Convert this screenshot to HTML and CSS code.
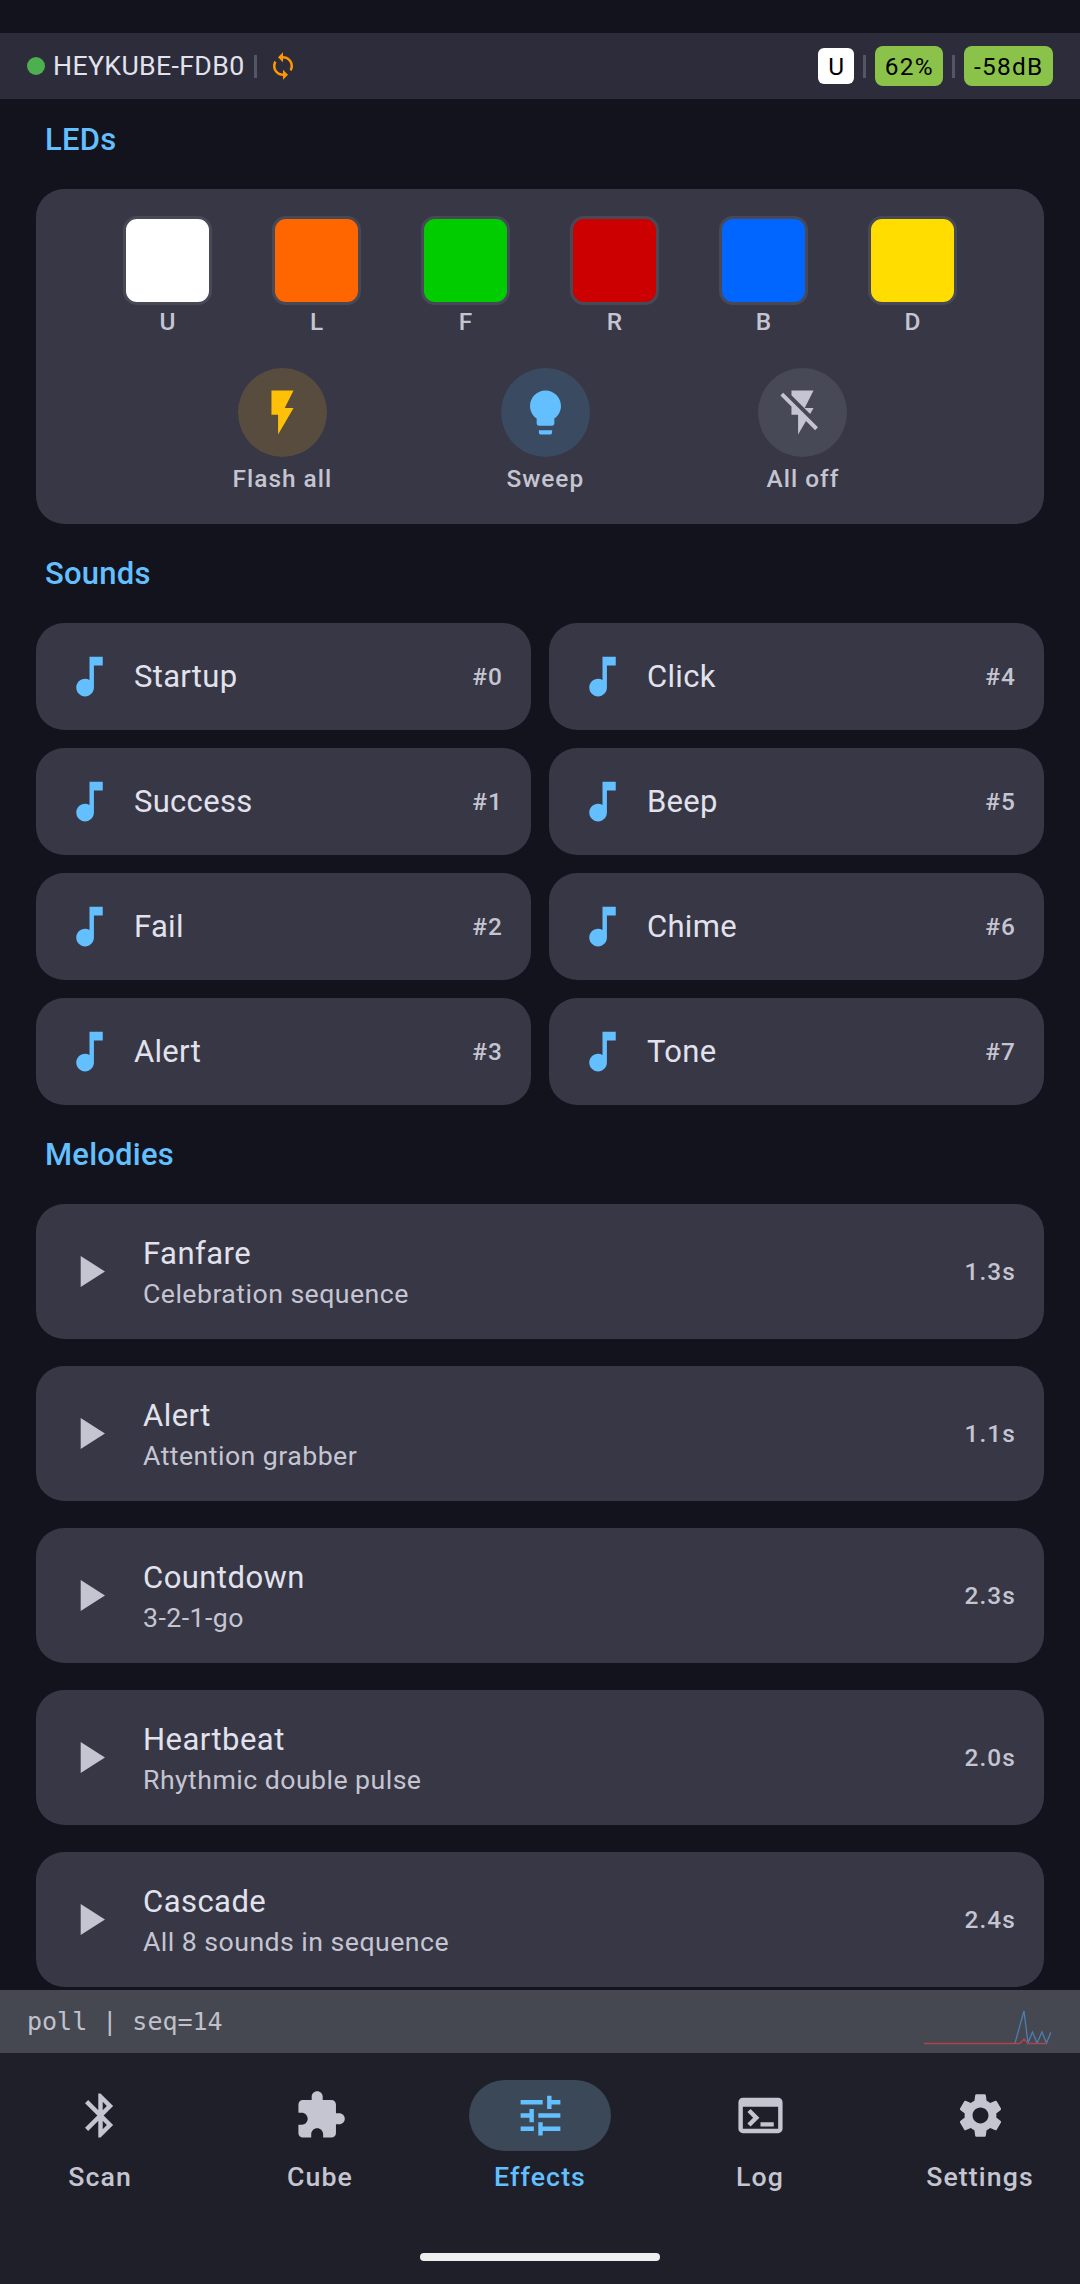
FILE: index.html
```html
<!DOCTYPE html>
<html lang="en">
<head>
    <meta charset="UTF-8">
    <meta name="viewport" content="width=device-width, initial-scale=1.0">
    <title>HeyKube Effects</title>
    <link rel="stylesheet" href="styles.css">
</head>
<body>
    <div class="status-space"></div>

    <header class="top-bar">
        <span class="dot"></span>
        <span class="device-name">HEYKUBE-FDB0</span>
        <span class="divider"></span>
        <svg class="sync-icon" viewBox="0 0 24 24"><path d="M12 4V1L8 5l4 4V6c3.31 0 6 2.69 6 6 0 1.01-.25 1.97-.7 2.8l1.46 1.46C19.54 15.03 20 13.57 20 12c0-4.42-3.58-8-8-8zm0 14c-3.31 0-6-2.69-6-6 0-1.01.25-1.97.7-2.8L5.24 7.74C4.46 8.97 4 10.43 4 12c0 4.42 3.58 8 8 8v3l4-4-4-4v3z"/></svg>
        <span class="top-spacer"></span>
        <span class="face-badge">U</span>
        <span class="divider"></span>
        <span class="pill">62%</span>
        <span class="divider"></span>
        <span class="pill">-58dB</span>
    </header>

    <main class="content">
        <h2 class="section-title first">LEDs</h2>
        <section class="led-card">
            <div class="led-row">
                <div class="led"><span class="swatch swatch-u"></span><span class="led-label">U</span></div>
                <div class="led"><span class="swatch swatch-l"></span><span class="led-label">L</span></div>
                <div class="led"><span class="swatch swatch-f"></span><span class="led-label">F</span></div>
                <div class="led"><span class="swatch swatch-r"></span><span class="led-label">R</span></div>
                <div class="led"><span class="swatch swatch-b"></span><span class="led-label">B</span></div>
                <div class="led"><span class="swatch swatch-d"></span><span class="led-label">D</span></div>
            </div>
            <div class="action-row">
                <div class="action">
                    <span class="circle circle-flash"><svg class="icon" viewBox="0 0 24 24"><path d="M7 2v11h3v9l7-12h-4l4-8z"/></svg></span>
                    <span class="action-label">Flash all</span>
                </div>
                <div class="action">
                    <span class="circle circle-sweep"><svg class="icon" viewBox="0 0 24 24"><path d="M9 21c0 .55.45 1 1 1h4c.55 0 1-.45 1-1v-1H9v1zm3-19C8.14 2 5 5.14 5 9c0 2.38 1.19 4.47 3 5.74V17c0 .55.45 1 1 1h6c.55 0 1-.45 1-1v-2.26c1.81-1.27 3-3.36 3-5.74 0-3.86-3.14-7-7-7z"/></svg></span>
                    <span class="action-label">Sweep</span>
                </div>
                <div class="action">
                    <span class="circle circle-off"><svg class="icon" viewBox="0 0 24 24"><path d="M3.27 3L2 4.27l5 5V13h3v9l3.58-6.14L17.73 20 19 18.73 3.27 3zM17 10h-4l4-8H7v2.18l8.46 8.46L17 10z"/></svg></span>
                    <span class="action-label">All off</span>
                </div>
            </div>
        </section>

        <h2 class="section-title">Sounds</h2>
        <section class="sound-grid">
            <div class="sound"><svg class="icon note" viewBox="0 0 24 24"><use href="#note"/></svg><span class="sound-name">Startup</span><span class="tag">#0</span></div>
            <div class="sound"><svg class="icon note" viewBox="0 0 24 24"><use href="#note"/></svg><span class="sound-name">Click</span><span class="tag">#4</span></div>
            <div class="sound"><svg class="icon note" viewBox="0 0 24 24"><use href="#note"/></svg><span class="sound-name">Success</span><span class="tag">#1</span></div>
            <div class="sound"><svg class="icon note" viewBox="0 0 24 24"><use href="#note"/></svg><span class="sound-name">Beep</span><span class="tag">#5</span></div>
            <div class="sound"><svg class="icon note" viewBox="0 0 24 24"><use href="#note"/></svg><span class="sound-name">Fail</span><span class="tag">#2</span></div>
            <div class="sound"><svg class="icon note" viewBox="0 0 24 24"><use href="#note"/></svg><span class="sound-name">Chime</span><span class="tag">#6</span></div>
            <div class="sound"><svg class="icon note" viewBox="0 0 24 24"><use href="#note"/></svg><span class="sound-name">Alert</span><span class="tag">#3</span></div>
            <div class="sound"><svg class="icon note" viewBox="0 0 24 24"><use href="#note"/></svg><span class="sound-name">Tone</span><span class="tag">#7</span></div>
        </section>

        <h2 class="section-title">Melodies</h2>
        <section class="melody-list">
            <div class="melody">
                <svg class="icon play" viewBox="0 0 24 24"><use href="#play"/></svg>
                <div class="melody-text"><span class="melody-name">Fanfare</span><span class="melody-desc">Celebration sequence</span></div>
                <span class="tag">1.3s</span>
            </div>
            <div class="melody">
                <svg class="icon play" viewBox="0 0 24 24"><use href="#play"/></svg>
                <div class="melody-text"><span class="melody-name">Alert</span><span class="melody-desc">Attention grabber</span></div>
                <span class="tag">1.1s</span>
            </div>
            <div class="melody">
                <svg class="icon play" viewBox="0 0 24 24"><use href="#play"/></svg>
                <div class="melody-text"><span class="melody-name">Countdown</span><span class="melody-desc">3-2-1-go</span></div>
                <span class="tag">2.3s</span>
            </div>
            <div class="melody">
                <svg class="icon play" viewBox="0 0 24 24"><use href="#play"/></svg>
                <div class="melody-text"><span class="melody-name">Heartbeat</span><span class="melody-desc">Rhythmic double pulse</span></div>
                <span class="tag">2.0s</span>
            </div>
            <div class="melody">
                <svg class="icon play" viewBox="0 0 24 24"><use href="#play"/></svg>
                <div class="melody-text"><span class="melody-name">Cascade</span><span class="melody-desc">All 8 sounds in sequence</span></div>
                <span class="tag">2.4s</span>
            </div>
        </section>
    </main>

    <div class="debug-bar">
        <span class="debug-text">poll | seq=14</span>
        <svg class="spark" viewBox="0 0 127 36">
            <polyline class="spark-blue" points="91,33 100,1 104,33 108.5,22 113,33 118,22 122.5,33 127,22"/>
            <polyline class="spark-red" points="0,33.5 96,33.5 100,29 104,33.5 123,33.5"/>
        </svg>
    </div>

    <nav class="bottom-nav">
        <div class="nav-items">
            <div class="nav-item">
                <span class="nav-icon"><svg class="icon" viewBox="0 0 24 24"><path d="M17.71 7.71L12 2h-1v7.59L6.41 5 5 6.41 10.59 12 5 17.59 6.41 19 11 14.41V22h1l5.71-5.71-4.3-4.29 4.3-4.29zM13 5.83l1.88 1.88L13 9.59V5.83zm1.88 10.46L13 18.17v-3.76l1.88 1.88z"/></svg></span>
                <span class="nav-label">Scan</span>
            </div>
            <div class="nav-item">
                <span class="nav-icon"><svg class="icon" viewBox="0 0 24 24"><path d="M20.5 11H19V7c0-1.1-.9-2-2-2h-4V3.5C13 2.12 11.88 1 10.5 1S8 2.12 8 3.5V5H4c-1.1 0-1.99.9-1.99 2v3.8H3.5c1.49 0 2.7 1.21 2.7 2.7s-1.21 2.7-2.7 2.7H2V20c0 1.1.9 2 2 2h3.8v-1.5c0-1.49 1.21-2.7 2.7-2.7 1.49 0 2.7 1.21 2.7 2.7V22H17c1.1 0 2-.9 2-2v-4h1.5c1.38 0 2.5-1.12 2.5-2.5S21.88 11 20.5 11z"/></svg></span>
                <span class="nav-label">Cube</span>
            </div>
            <div class="nav-item active">
                <span class="nav-icon"><svg class="icon" viewBox="0 0 24 24"><path d="M3 17v2h6v-2H3zM3 5v2h10V5H3zm10 16v-2h8v-2h-8v-2h-2v6h2zM7 9v2H3v2h4v2h2V9H7zm14 4v-2H11v2h10zm-6-4h2V7h4V5h-4V3h-2v6z"/></svg></span>
                <span class="nav-label">Effects</span>
            </div>
            <div class="nav-item">
                <span class="nav-icon"><svg class="icon" viewBox="0 0 24 24"><path d="M20 4H4c-1.1 0-2 .9-2 2v12c0 1.1.9 2 2 2h16c1.1 0 2-.9 2-2V6c0-1.1-.9-2-2-2zm0 14H4V8h16v10zm-2-1h-6v-2h6v2zM7.5 17l-1.41-1.41L8.67 13l-2.59-2.59L7.5 9l4 4-4 4z"/></svg></span>
                <span class="nav-label">Log</span>
            </div>
            <div class="nav-item">
                <span class="nav-icon"><svg class="icon" viewBox="0 0 24 24"><path d="M19.14 12.94c.04-.3.06-.61.06-.94 0-.32-.02-.64-.07-.94l2.03-1.58c.18-.14.23-.41.12-.61l-1.92-3.32c-.12-.22-.37-.29-.59-.22l-2.39.96c-.5-.38-1.03-.7-1.62-.94l-.36-2.54c-.04-.24-.24-.41-.48-.41h-3.84c-.24 0-.43.17-.47.41l-.36 2.54c-.59.24-1.13.57-1.62.94l-2.39-.96c-.22-.08-.47 0-.59.22L2.74 8.87c-.12.21-.08.47.12.61l2.03 1.58c-.05.3-.09.63-.09.94s.02.64.07.94l-2.03 1.58c-.18.14-.23.41-.12.61l1.92 3.32c.12.22.37.29.59.22l2.39-.96c.5.38 1.03.7 1.62.94l.36 2.54c.05.24.24.41.48.41h3.84c.24 0 .44-.17.47-.41l.36-2.54c.59-.24 1.13-.56 1.62-.94l2.39.96c.22.08.47 0 .59-.22l1.92-3.32c.12-.22.07-.47-.12-.61l-2.01-1.58zM12 15.6c-1.98 0-3.6-1.62-3.6-3.6s1.62-3.6 3.6-3.6 3.6 1.62 3.6 3.6-1.62 3.6-3.6 3.6z"/></svg></span>
                <span class="nav-label">Settings</span>
            </div>
        </div>
        <div class="home-bar"></div>
    </nav>

    <!-- shared icons -->
    <svg class="icon-defs">
        <defs>
            <path id="note" d="M12 3v10.55c-.59-.34-1.27-.55-2-.55-2.21 0-4 1.79-4 4s1.79 4 4 4 4-1.79 4-4V7h4V3h-6z"/>
            <path id="play" d="M8 5v14l11-7z"/>
        </defs>
    </svg>
</body>
</html>
```

FILE: styles.css
```css
* {
    box-sizing: border-box;
}

body {
    font-family: Roboto, "Noto Sans", sans-serif;
    display: flex;
    flex-direction: column;
    width: 1080px;
    height: 2284px;
    margin: 0;
    background-color: #12131c;
    overflow: hidden;
}

.status-space {
    height: 33px;
    flex: none;
}

.icon {
    width: 53px;
    height: 53px;
    display: block;
    fill: currentColor;
    flex: none;
}

.icon-defs {
    display: none;
}

/* top bar */
.top-bar {
    display: flex;
    align-items: center;
    flex: none;
    height: 66px;
    padding: 0 27px;
    background-color: #2c2c3a;
}

.dot {
    width: 18px;
    height: 18px;
    border-radius: 50%;
    background-color: #4caf50;
    margin-right: 8px;
}

.device-name {
    font-size: 26.7px;
    letter-spacing: 0.35px;
    color: #e2e2ec;
}

.divider {
    width: 3px;
    height: 23px;
    margin: 0 9px;
    background-color: #555665;
}

.sync-icon {
    width: 30px;
    height: 30px;
    margin-left: 2px;
    fill: #ff9800;
}

.top-spacer {
    flex: 1;
}

.face-badge {
    display: flex;
    align-items: center;
    justify-content: center;
    width: 36px;
    height: 36px;
    border-radius: 6px;
    background-color: #fff;
    color: #000;
    font-size: 24.4px;
}

.pill {
    display: flex;
    align-items: center;
    height: 40px;
    padding: 0 9.5px;
    border-radius: 8px;
    background-color: #8bc34a;
    color: #000;
    font-size: 24.4px;
    letter-spacing: 1.3px;
}

/* main column */
.content {
    flex: 1;
    min-height: 0;
    overflow: hidden;
    padding: 0 36px;
}

.section-title {
    height: 32px;
    margin: 34px 0 33px 9px;
    font-size: 31px;
    font-weight: 500;
    letter-spacing: 0.22px;
    line-height: 32px;
    color: #64bfff;
}

.section-title.first {
    margin-top: 25px;
}

.led-card {
    height: 335px;
    padding-top: 27px;
    border-radius: 28px;
    background-color: #373746;
}

.led-row {
    display: flex;
    justify-content: center;
    gap: 60px;
}

.led {
    display: flex;
    flex-direction: column;
    align-items: center;
    gap: 4px;
}

.swatch {
    width: 89px;
    height: 89px;
    border: 3px solid #484957;
    border-radius: 14px;
}

.swatch-u { background-color: #fff; }
.swatch-l { background-color: #ff6600; }
.swatch-f { background-color: #00cc00; }
.swatch-r { background-color: #cc0000; }
.swatch-b { background-color: #0066ff; }
.swatch-d { background-color: #ffdd00; }

.led-label {
    font-size: 24.4px;
    font-weight: 500;
    line-height: 26px;
    color: #c5c5d1;
}

.action-row {
    display: flex;
    justify-content: space-evenly;
    margin-top: 33px;
    padding: 0 28px;
}

.action {
    display: flex;
    flex-direction: column;
    align-items: center;
    gap: 8px;
}

.circle {
    display: flex;
    align-items: center;
    justify-content: center;
    width: 89px;
    height: 89px;
    border-radius: 50%;
}

.circle-flash { background-color: #574c3d; color: #ffc107; }
.circle-sweep { background-color: #3a4a61; color: #64bfff; }
.circle-off { background-color: #484957; color: #c5c5d1; }

.action-label {
    font-size: 24.4px;
    font-weight: 500;
    letter-spacing: 1px;
    line-height: 28px;
    color: #c5c5d1;
}

/* sounds */
.sound-grid {
    display: grid;
    grid-template-columns: 495px 495px;
    grid-auto-rows: 107px;
    gap: 18px;
}

.sound {
    display: flex;
    align-items: center;
    padding: 0 28px 0 27px;
    border-radius: 28px;
    background-color: #373746;
}

.note {
    color: #64bfff;
    margin-right: 18px;
}

.sound-name {
    flex: 1;
    font-size: 31px;
    letter-spacing: 0.3px;
    color: #e2e2ec;
}

.tag {
    font-size: 24.4px;
    font-weight: 500;
    letter-spacing: 1.1px;
    color: #c5c5d1;
}

/* melodies */
.melody-list {
    display: flex;
    flex-direction: column;
    gap: 27px;
}

.melody {
    display: flex;
    align-items: center;
    flex: none;
    height: 135px;
    padding: 0 28px 0 27px;
    border-radius: 28px;
    background-color: #373746;
}

.play {
    color: #c5c5d1;
    margin-right: 27px;
}

.melody-text {
    display: flex;
    flex-direction: column;
    flex: 1;
    padding-top: 4px;
}

.melody-name {
    font-size: 31px;
    letter-spacing: 0.45px;
    line-height: 41px;
    color: #e2e2ec;
}

.melody-desc {
    font-size: 26.7px;
    letter-spacing: 0.45px;
    line-height: 41px;
    color: #c5c5d1;
}

/* debug strip */
.debug-bar {
    display: flex;
    align-items: center;
    justify-content: space-between;
    flex: none;
    height: 63px;
    padding: 0 29px 0 27px;
    background-color: #454850;
}

.debug-text {
    font-family: "DejaVu Sans Mono", monospace;
    font-size: 25px;
    color: #c0c1cb;
}

.spark {
    width: 127px;
    height: 36px;
    margin-top: 13px;
    fill: none;
    stroke-width: 1.3;
}

.spark-blue { stroke: #4e7db0; }
.spark-red { stroke: #b0444e; }

/* bottom nav */
.bottom-nav {
    display: flex;
    flex-direction: column;
    align-items: center;
    flex: none;
    height: 231px;
    padding-top: 27px;
    background-color: #1e1f29;
}

.nav-items {
    display: flex;
    justify-content: center;
    gap: 78px;
}

.nav-item {
    display: flex;
    flex-direction: column;
    align-items: center;
    width: 142px;
    color: #c5c5d1;
}

.nav-icon {
    display: flex;
    align-items: center;
    justify-content: center;
    width: 142px;
    height: 71px;
    border-radius: 36px;
}

.nav-item.active {
    color: #64bfff;
}

.nav-item.active .nav-icon {
    background-color: #3a4858;
}

.nav-label {
    margin-top: 10px;
    font-size: 26.7px;
    font-weight: 500;
    letter-spacing: 1.1px;
    line-height: 32px;
}

.home-bar {
    width: 240px;
    height: 8px;
    margin-top: 60px;
    border-radius: 4px;
    background-color: #eee;
}
```
